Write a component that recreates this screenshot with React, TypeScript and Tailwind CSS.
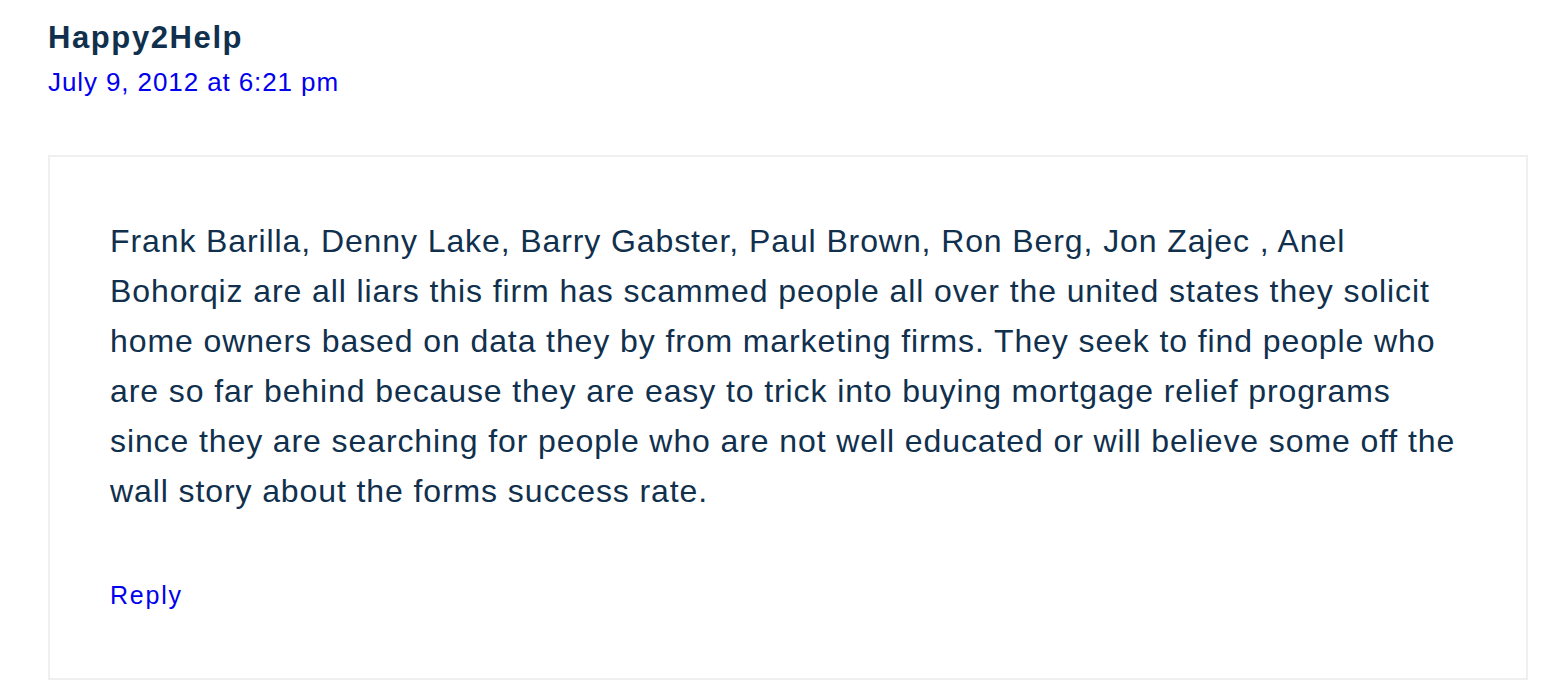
export default function App() {
  return (
    <div className="min-h-screen bg-white font-['Liberation_Sans',Arial,sans-serif] text-[#10304d]">
      <div className="pl-[48px] pr-[36px] pt-[19px]">
        <div className="text-[31px] font-bold leading-[38px] tracking-[1.6px]">Happy2Help</div>
        <a href="#" className="mt-[7px] block text-[26px] leading-[36px] tracking-[0.9px] text-[#0000ee]">
          July 9, 2012 at 6:21 pm
        </a>
        <div className="mt-[55px] w-[1480px] border-2 border-[#efefef] pl-[60px] pr-[66px] pt-[59px] pb-[65px]">
          <p className="text-[32px] leading-[50px] tracking-[0.9px]">
            Frank Barilla, Denny Lake, Barry Gabster, Paul Brown, Ron Berg, Jon Zajec , Anel Bohorqiz are all liars this firm has scammed people all over the united states they solicit home owners based on data they by from marketing firms. They seek to find people who are so far behind because they are easy to trick into buying mortgage relief programs since they are searching for people who are not well educated or will believe some off the wall story about the forms success rate.
          </p>
          <a href="#" className="mt-[61px] block text-[25px] leading-[36px] tracking-[1.8px] text-[#0000ee]">
            Reply
          </a>
        </div>
      </div>
    </div>
  );
}
